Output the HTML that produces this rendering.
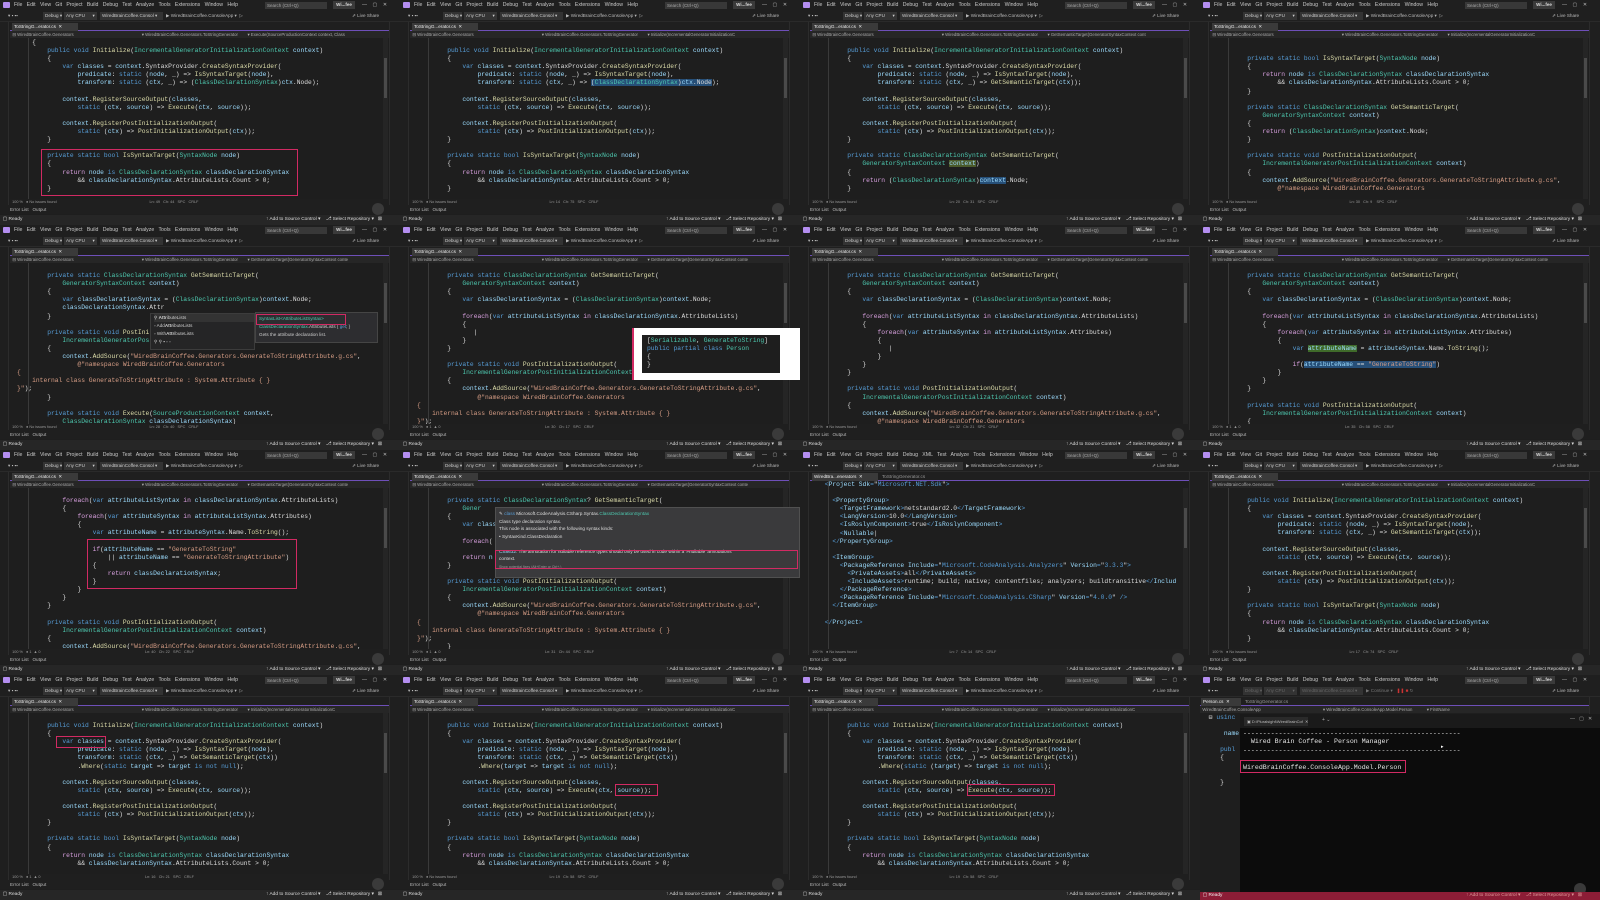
<!DOCTYPE html>
<html><head><meta charset="utf-8">
<style>
*{margin:0;padding:0;box-sizing:border-box}
body{width:1600px;height:900px;background:#1e1e1e;position:relative;overflow:hidden;font-family:"Liberation Sans",sans-serif}
.tile{position:absolute;width:400px;height:225px;overflow:hidden;background:#1e1e1e}
.mb{position:absolute;left:0;top:0;width:400px;height:10px;background:#1f1f1f}
.logo{position:absolute;left:3px;top:2px;width:7px;height:6px;background:#b48ef0;border-radius:1px}
.menu{position:absolute;left:14px;top:1.5px;font-size:5.2px;color:#c8c8c8;white-space:pre}
.srch{position:absolute;left:265px;top:1.5px;width:62px;height:7px;background:#383838;font-size:4.5px;color:#aaa;padding-left:2px;font-weight:normal;line-height:7px}
.wi{position:absolute;left:333px;top:1px;width:22px;height:8px;background:#3a3a3a;font-size:4.5px;color:#ddd;line-height:8px;text-align:center}
.wc{position:absolute;left:362px;top:1.5px;font-size:5px;color:#bbb;white-space:pre}
.tb{position:absolute;left:0;top:10px;width:400px;height:12px;background:#1f1f1f;border-bottom:1px solid #2a2a2a}
.dd{position:absolute;top:2px;height:8px;background:#333;font-size:4.6px;color:#ccc;line-height:8px;padding-left:2px;white-space:pre}
.tx{position:absolute;font-size:4.6px;color:#bbb;white-space:pre}
.ls{position:absolute;left:0;top:22px;width:9px;height:183px;background:#1f1f1f;border-right:1px solid #2c2c2c}
.rs{position:absolute;right:0;top:22px;width:11px;height:183px;background:#1f1f1f;border-left:1px solid #2c2c2c}
.tabs{position:absolute;left:10px;top:22px;width:379px;height:9px;background:#1f1f1f;border-bottom:1px solid #6e4fb8}
.tab{position:absolute;left:2px;top:1px;height:8px;width:66px;background:#3a3a3a;font-size:4.6px;color:#eee;line-height:8px;padding-left:2px;white-space:pre}
.tab2{position:absolute;left:70px;top:1px;height:8px;width:64px;font-size:4.6px;color:#999;line-height:8px;padding-left:2px;white-space:pre}
.nav{position:absolute;left:10px;top:31px;width:379px;height:7px;background:#262626;font-size:4.3px;color:#aaa;line-height:7px;white-space:pre}
.gut{position:absolute;left:28px;top:38px;width:1px;height:161px;background:#3a3a3a}
.vs{position:absolute;left:383px;top:38px;width:5px;height:161px;background:#252525}
.vs i{position:absolute;left:1px;top:20px;width:3px;height:40px;background:#4a4a4a}
pre{position:absolute;left:17px;top:39px;font-family:"Liberation Mono",monospace;font-size:6.3px;line-height:8.1px;color:#dcdcdc}
k{color:#569cd6}t{color:#4ec9b0}m{color:#dcdcaa}v{color:#9cdcfe}s{color:#d69d85;text-decoration:none}c{color:#d8a0df}
.sel{background:#264f78}
.bot{position:absolute;left:10px;top:199px;width:379px;height:6px;background:#1f1f1f;font-size:3.8px;color:#999;line-height:6px;white-space:pre}
.el{position:absolute;left:0;top:205px;width:400px;height:9px;background:#1f1f1f;font-size:4.6px;color:#bbb;line-height:9px;padding-left:10px;white-space:pre}
.sb{position:absolute;left:0;top:215px;width:400px;height:10px;background:#262626;font-size:4.8px;color:#ddd;line-height:10px;white-space:pre}
.sb .r{position:absolute;left:266px;top:0}
.avat{position:absolute;left:372px;top:203px;width:12px;height:12px;border-radius:50%;background:#3a3a3a}
.box{position:absolute;border:1.5px solid #d12a63}
</style></head><body>

<div class="tile" style="left:0;top:0">
<div class="mb"><i class="logo"></i><span class="menu">File   Edit   View   Git   Project   Build   Debug   Test   Analyze   Tools   Extensions   Window   Help</span><b class="srch">Search (Ctrl+Q)</b><b class="wi">Wi...fee</b><span class="wc">—    ▢    ✕</span></div>
<div class="tb"><span class="tx" style="left:8px;top:3px">▾ ▪ ▪▪</span><span class="dd" style="left:43px;width:19px">Debug ▾</span><span class="dd" style="left:64px;width:33px">Any CPU      ▾</span><span class="dd" style="left:100px;width:63px">WiredBrainCoffee.Consol ▾</span><span class="tx" style="left:166px;top:3px">▶ WiredBrainCoffee.ConsoleApp ▾  ▷</span><span class="tx" style="left:352px;top:3px">⇗ Live Share</span></div>
<div class="ls"></div><div class="rs"></div>
<div class="tabs"><span class="tab">ToStringG...erator.cs  ✕</span></div>
<div class="nav">  ⊟ WiredBrainCoffee.Generators                                                         ▾ WiredBrainCoffee.Generators.ToStringGenerator        ▾ Execute(SourceProductionContext context, Class</div>
<div class="gut"></div><div class="vs"><i></i></div>
<pre>    {
        <k>public void</k> <m>Initialize</m>(<t>IncrementalGeneratorInitializationContext</t> <v>context</v>)
        {
            <k>var</k> <v>classes</v> = <v>context</v>.SyntaxProvider.<m>CreateSyntaxProvider</m>(
                <v>predicate</v>: <k>static</k> (<v>node</v>, _) =&gt; <m>IsSyntaxTarget</m>(<v>node</v>),
                <v>transform</v>: <k>static</k> (<v>ctx</v>, _) =&gt; (<t>ClassDeclarationSyntax</t>)<v>ctx</v>.Node);

            <v>context</v>.<m>RegisterSourceOutput</m>(<v>classes</v>,
                <k>static</k> (<v>ctx</v>, <v>source</v>) =&gt; <m>Execute</m>(<v>ctx</v>, <v>source</v>));

            <v>context</v>.<m>RegisterPostInitializationOutput</m>(
                <k>static</k> (<v>ctx</v>) =&gt; <m>PostInitializationOutput</m>(<v>ctx</v>));
        }

        <k>private static bool</k> <m>IsSyntaxTarget</m>(<t>SyntaxNode</t> <v>node</v>)
        {
            <c>return</c> <v>node</v> <k>is</k> <t>ClassDeclarationSyntax</t> <v>classDeclarationSyntax</v>
                &amp;&amp; <v>classDeclarationSyntax</v>.AttributeLists.Count &gt; 0;
        }</pre>
<div class="box" style="left:41px;top:149px;width:257px;height:47px"></div>
<div class="bot">  100 %   ● No issues found                                                                                        Ln: 49   Ch: 44   SPC   CRLF</div>
<div class="el">Error List   Output</div><div class="avat"></div>
<div class="sb">  ▢ Ready<span class="r">↑ Add to Source Control ▾    ⎇ Select Repository ▾   ⊠</span></div>
</div>

<div class="tile" style="left:400px;top:0">
<div class="mb"><i class="logo"></i><span class="menu">File   Edit   View   Git   Project   Build   Debug   Test   Analyze   Tools   Extensions   Window   Help</span><b class="srch">Search (Ctrl+Q)</b><b class="wi">Wi...fee</b><span class="wc">—    ▢    ✕</span></div>
<div class="tb"><span class="tx" style="left:8px;top:3px">▾ ▪ ▪▪</span><span class="dd" style="left:43px;width:19px">Debug ▾</span><span class="dd" style="left:64px;width:33px">Any CPU      ▾</span><span class="dd" style="left:100px;width:63px">WiredBrainCoffee.Consol ▾</span><span class="tx" style="left:166px;top:3px">▶ WiredBrainCoffee.ConsoleApp ▾  ▷</span><span class="tx" style="left:352px;top:3px">⇗ Live Share</span></div>
<div class="ls"></div><div class="rs"></div>
<div class="tabs"><span class="tab">ToStringG...erator.cs  ✕</span></div>
<div class="nav">  ⊟ WiredBrainCoffee.Generators                                                         ▾ WiredBrainCoffee.Generators.ToStringGenerator        ▾ Initialize(IncrementalGeneratorInitializationC</div>
<div class="gut"></div><div class="vs"><i></i></div>
<pre> 
        <k>public void</k> <m>Initialize</m>(<t>IncrementalGeneratorInitializationContext</t> <v>context</v>)
        {
            <k>var</k> <v>classes</v> = <v>context</v>.SyntaxProvider.<m>CreateSyntaxProvider</m>(
                <v>predicate</v>: <k>static</k> (<v>node</v>, _) =&gt; <m>IsSyntaxTarget</m>(<v>node</v>),
                <v>transform</v>: <k>static</k> (<v>ctx</v>, _) =&gt; <span class="sel">(<t>ClassDeclarationSyntax</t>)<v>ctx</v>.Node</span>);

            <v>context</v>.<m>RegisterSourceOutput</m>(<v>classes</v>,
                <k>static</k> (<v>ctx</v>, <v>source</v>) =&gt; <m>Execute</m>(<v>ctx</v>, <v>source</v>));

            <v>context</v>.<m>RegisterPostInitializationOutput</m>(
                <k>static</k> (<v>ctx</v>) =&gt; <m>PostInitializationOutput</m>(<v>ctx</v>));
        }

        <k>private static bool</k> <m>IsSyntaxTarget</m>(<t>SyntaxNode</t> <v>node</v>)
        {
            <c>return</c> <v>node</v> <k>is</k> <t>ClassDeclarationSyntax</t> <v>classDeclarationSyntax</v>
                &amp;&amp; <v>classDeclarationSyntax</v>.AttributeLists.Count &gt; 0;
        }</pre>
<div class="bot">  100 %   ● No issues found                                                                                        Ln: 14   Ch: 75   SPC   CRLF</div>
<div class="el">Error List   Output</div><div class="avat"></div>
<div class="sb">  ▢ Ready<span class="r">↑ Add to Source Control ▾    ⎇ Select Repository ▾   ⊠</span></div>
</div>

<div class="tile" style="left:800px;top:0">
<div class="mb"><i class="logo"></i><span class="menu">File   Edit   View   Git   Project   Build   Debug   Test   Analyze   Tools   Extensions   Window   Help</span><b class="srch">Search (Ctrl+Q)</b><b class="wi">Wi...fee</b><span class="wc">—    ▢    ✕</span></div>
<div class="tb"><span class="tx" style="left:8px;top:3px">▾ ▪ ▪▪</span><span class="dd" style="left:43px;width:19px">Debug ▾</span><span class="dd" style="left:64px;width:33px">Any CPU      ▾</span><span class="dd" style="left:100px;width:63px">WiredBrainCoffee.Consol ▾</span><span class="tx" style="left:166px;top:3px">▶ WiredBrainCoffee.ConsoleApp ▾  ▷</span><span class="tx" style="left:352px;top:3px">⇗ Live Share</span></div>
<div class="ls"></div><div class="rs"></div>
<div class="tabs"><span class="tab">ToStringG...erator.cs  ✕</span></div>
<div class="nav">  ⊟ WiredBrainCoffee.Generators                                                         ▾ WiredBrainCoffee.Generators.ToStringGenerator        ▾ GetSemanticTarget(GeneratorSyntaxContext cont</div>
<div class="gut"></div><div class="vs"><i></i></div>
<pre> 
        <k>public void</k> <m>Initialize</m>(<t>IncrementalGeneratorInitializationContext</t> <v>context</v>)
        {
            <k>var</k> <v>classes</v> = <v>context</v>.SyntaxProvider.<m>CreateSyntaxProvider</m>(
                <v>predicate</v>: <k>static</k> (<v>node</v>, _) =&gt; <m>IsSyntaxTarget</m>(<v>node</v>),
                <v>transform</v>: <k>static</k> (<v>ctx</v>, _) =&gt; <m>GetSemanticTarget</m>(<v>ctx</v>));

            <v>context</v>.<m>RegisterSourceOutput</m>(<v>classes</v>,
                <k>static</k> (<v>ctx</v>, <v>source</v>) =&gt; <m>Execute</m>(<v>ctx</v>, <v>source</v>));

            <v>context</v>.<m>RegisterPostInitializationOutput</m>(
                <k>static</k> (<v>ctx</v>) =&gt; <m>PostInitializationOutput</m>(<v>ctx</v>));
        }

        <k>private static</k> <t>ClassDeclarationSyntax</t> <m>GetSemanticTarget</m>(
            <t>GeneratorSyntaxContext</t> <span style="background:#4b5a2a"><v>context</v></span>)
        {
            <c>return</c> (<t>ClassDeclarationSyntax</t>)<span class="sel"><v>context</v></span>.Node;
        }</pre>
<div class="bot">  100 %   ● No issues found                                                                                        Ln: 20   Ch: 31   SPC   CRLF</div>
<div class="el">Error List   Output</div><div class="avat"></div>
<div class="sb">  ▢ Ready<span class="r">↑ Add to Source Control ▾    ⎇ Select Repository ▾   ⊠</span></div>
</div>

<div class="tile" style="left:1200px;top:0">
<div class="mb"><i class="logo"></i><span class="menu">File   Edit   View   Git   Project   Build   Debug   Test   Analyze   Tools   Extensions   Window   Help</span><b class="srch">Search (Ctrl+Q)</b><b class="wi">Wi...fee</b><span class="wc">—    ▢    ✕</span></div>
<div class="tb"><span class="tx" style="left:8px;top:3px">▾ ▪ ▪▪</span><span class="dd" style="left:43px;width:19px">Debug ▾</span><span class="dd" style="left:64px;width:33px">Any CPU      ▾</span><span class="dd" style="left:100px;width:63px">WiredBrainCoffee.Consol ▾</span><span class="tx" style="left:166px;top:3px">▶ WiredBrainCoffee.ConsoleApp ▾  ▷</span><span class="tx" style="left:352px;top:3px">⇗ Live Share</span></div>
<div class="ls"></div><div class="rs"></div>
<div class="tabs"><span class="tab">ToStringG...erator.cs  ✕</span></div>
<div class="nav">  ⊟ WiredBrainCoffee.Generators                                                         ▾ WiredBrainCoffee.Generators.ToStringGenerator        ▾ Initialize(IncrementalGeneratorInitializationC</div>
<div class="gut"></div><div class="vs"><i></i></div>
<pre> 

        <k>private static bool</k> <m>IsSyntaxTarget</m>(<t>SyntaxNode</t> <v>node</v>)
        {
            <c>return</c> <v>node</v> <k>is</k> <t>ClassDeclarationSyntax</t> <v>classDeclarationSyntax</v>
                &amp;&amp; <v>classDeclarationSyntax</v>.AttributeLists.Count &gt; 0;
        }

        <k>private static</k> <t>ClassDeclarationSyntax</t> <m>GetSemanticTarget</m>(
            <t>GeneratorSyntaxContext</t> <v>context</v>)
        {
            <c>return</c> (<t>ClassDeclarationSyntax</t>)<v>context</v>.Node;
        }

        <k>private static void</k> <m>PostInitializationOutput</m>(
            <t>IncrementalGeneratorPostInitializationContext</t> <v>context</v>)
        {
            <v>context</v>.<m>AddSource</m>(<s>"WiredBrainCoffee.Generators.GenerateToStringAttribute.g.cs"</s>,
                <s>@"namespace WiredBrainCoffee.Generators</s></pre>
<div class="bot">  100 %   ● No issues found                                                                                        Ln: 30   Ch: 9    SPC   CRLF</div>
<div class="el">Error List   Output</div><div class="avat"></div>
<div class="sb">  ▢ Ready<span class="r">↑ Add to Source Control ▾    ⎇ Select Repository ▾   ⊠</span></div>
</div>

<div class="tile" style="left:0;top:225px">
<div class="mb"><i class="logo"></i><span class="menu">File   Edit   View   Git   Project   Build   Debug   Test   Analyze   Tools   Extensions   Window   Help</span><b class="srch">Search (Ctrl+Q)</b><b class="wi">Wi...fee</b><span class="wc">—    ▢    ✕</span></div>
<div class="tb"><span class="tx" style="left:8px;top:3px">▾ ▪ ▪▪</span><span class="dd" style="left:43px;width:19px">Debug ▾</span><span class="dd" style="left:64px;width:33px">Any CPU      ▾</span><span class="dd" style="left:100px;width:63px">WiredBrainCoffee.Consol ▾</span><span class="tx" style="left:166px;top:3px">▶ WiredBrainCoffee.ConsoleApp ▾  ▷</span><span class="tx" style="left:352px;top:3px">⇗ Live Share</span></div>
<div class="ls"></div><div class="rs"></div>
<div class="tabs"><span class="tab">ToStringG...erator.cs  ✕</span></div>
<div class="nav">  ⊟ WiredBrainCoffee.Generators                                                         ▾ WiredBrainCoffee.Generators.ToStringGenerator        ▾ GetSemanticTarget(GeneratorSyntaxContext conte</div>
<div class="gut"></div><div class="vs"><i></i></div>
<pre> 
        <k>private static</k> <t>ClassDeclarationSyntax</t> <m>GetSemanticTarget</m>(
            <t>GeneratorSyntaxContext</t> <v>context</v>)
        {
            <k>var</k> <v>classDeclarationSyntax</v> = (<t>ClassDeclarationSyntax</t>)<v>context</v>.Node;
            <v>classDeclarationSyntax</v>.Attr
        }

        <k>private static void</k> <m>PostIni</m>
            <t>IncrementalGeneratorPos</t>
        {
            <v>context</v>.<m>AddSource</m>(<s>"WiredBrainCoffee.Generators.GenerateToStringAttribute.g.cs"</s>,
                <s>@"namespace WiredBrainCoffee.Generators</s>
<s>{</s>
<s>    internal class GenerateToStringAttribute : System.Attribute { }</s>
<s>}"</s>);
        }

        <k>private static void</k> <m>Execute</m>(<t>SourceProductionContext</t> <v>context</v>,
            <t>ClassDeclarationSyntax</t> <v>classDeclarationSyntax</v>)</pre>
<div style="position:absolute;left:150px;top:88px;width:105px;height:37px;background:#252526;border:1px solid #3c3c3c;font-size:4.6px;color:#ccc;line-height:8px;padding-left:3px;white-space:pre"><div style="background:#333">⚲ <b>Attr</b>ibuteLists</div>▫ Add<b>Attr</b>ibuteLists
▫ With<b>Attr</b>ibuteLists
⚲ ⚲ ▪ ▫ ▫</div>
<div style="position:absolute;left:255px;top:87px;width:123px;height:31px;background:#2d2d30;border:1px solid #454545;font-size:4.6px;color:#ccc;line-height:8px;padding:2px 3px;white-space:pre"><span style="color:#4ec9b0">SyntaxList&lt;AttributeListSyntax&gt;</span>
<span style="color:#4ec9b0">ClassDeclarationSyntax</span>.AttributeLists { <k>get</k>; }
Gets the attribute declaration list.</div>
<div class="box" style="left:256px;top:89px;width:90px;height:11px"></div>
<div class="bot">  100 %   ● No issues found                                                                                        Ln: 28   Ch: 40   SPC   CRLF</div>
<div class="el">Error List   Output</div><div class="avat"></div>
<div class="sb">  ▢ Ready<span class="r">↑ Add to Source Control ▾    ⎇ Select Repository ▾   ⊠</span></div>
</div>

<div class="tile" style="left:400px;top:225px">
<div class="mb"><i class="logo"></i><span class="menu">File   Edit   View   Git   Project   Build   Debug   Test   Analyze   Tools   Extensions   Window   Help</span><b class="srch">Search (Ctrl+Q)</b><b class="wi">Wi...fee</b><span class="wc">—    ▢    ✕</span></div>
<div class="tb"><span class="tx" style="left:8px;top:3px">▾ ▪ ▪▪</span><span class="dd" style="left:43px;width:19px">Debug ▾</span><span class="dd" style="left:64px;width:33px">Any CPU      ▾</span><span class="dd" style="left:100px;width:63px">WiredBrainCoffee.Consol ▾</span><span class="tx" style="left:166px;top:3px">▶ WiredBrainCoffee.ConsoleApp ▾  ▷</span><span class="tx" style="left:352px;top:3px">⇗ Live Share</span></div>
<div class="ls"></div><div class="rs"></div>
<div class="tabs"><span class="tab">ToStringG...erator.cs  ✕</span></div>
<div class="nav">  ⊟ WiredBrainCoffee.Generators                                                         ▾ WiredBrainCoffee.Generators.ToStringGenerator        ▾ GetSemanticTarget(GeneratorSyntaxContext conte</div>
<div class="gut"></div><div class="vs"><i></i></div>
<pre> 
        <k>private static</k> <t>ClassDeclarationSyntax</t> <m>GetSemanticTarget</m>(
            <t>GeneratorSyntaxContext</t> <v>context</v>)
        {
            <k>var</k> <v>classDeclarationSyntax</v> = (<t>ClassDeclarationSyntax</t>)<v>context</v>.Node;

            <c>foreach</c>(<k>var</k> <v>attributeListSyntax</v> <c>in</c> <v>classDeclarationSyntax</v>.AttributeLists)
            {
               |
            }
        }

        <k>private static void</k> <m>PostInitializationOutput</m>(
            <t>IncrementalGeneratorPostInitializationContext</t> <v>context</v>)
        {
            <v>context</v>.<m>AddSource</m>(<s>"WiredBrainCoffee.Generators.GenerateToStringAttribute.g.cs"</s>,
                <s>@"namespace WiredBrainCoffee.Generators</s>
<s>{</s>
<s>    internal class GenerateToStringAttribute : System.Attribute { }</s>
<s>}"</s>);</pre>
<div style="position:absolute;left:232px;top:103px;width:168px;height:52px;background:#fff;border-left:2px solid #d12a63"></div>
<div style="position:absolute;left:242px;top:110px;width:138px;height:38px;background:#1e1e1e;font-family:'Liberation Mono',monospace;font-size:6.3px;line-height:8.1px;color:#dcdcdc;padding:2px 5px;white-space:pre">[<t>Serializable</t>, <t>GenerateToString</t>]
<k>public partial class</k> <t>Person</t>
{
}</div>
<div class="bot">  100 %   ● 1  ▲ 0                                                                                                   Ln: 30   Ch: 17   SPC   CRLF</div>
<div class="el">Error List   Output</div><div class="avat"></div>
<div class="sb">  ▢ Ready<span class="r">↑ Add to Source Control ▾    ⎇ Select Repository ▾   ⊠</span></div>
</div>

<div class="tile" style="left:800px;top:225px">
<div class="mb"><i class="logo"></i><span class="menu">File   Edit   View   Git   Project   Build   Debug   Test   Analyze   Tools   Extensions   Window   Help</span><b class="srch">Search (Ctrl+Q)</b><b class="wi">Wi...fee</b><span class="wc">—    ▢    ✕</span></div>
<div class="tb"><span class="tx" style="left:8px;top:3px">▾ ▪ ▪▪</span><span class="dd" style="left:43px;width:19px">Debug ▾</span><span class="dd" style="left:64px;width:33px">Any CPU      ▾</span><span class="dd" style="left:100px;width:63px">WiredBrainCoffee.Consol ▾</span><span class="tx" style="left:166px;top:3px">▶ WiredBrainCoffee.ConsoleApp ▾  ▷</span><span class="tx" style="left:352px;top:3px">⇗ Live Share</span></div>
<div class="ls"></div><div class="rs"></div>
<div class="tabs"><span class="tab">ToStringG...erator.cs  ✕</span></div>
<div class="nav">  ⊟ WiredBrainCoffee.Generators                                                         ▾ WiredBrainCoffee.Generators.ToStringGenerator        ▾ GetSemanticTarget(GeneratorSyntaxContext conte</div>
<div class="gut"></div><div class="vs"><i></i></div>
<pre> 
        <k>private static</k> <t>ClassDeclarationSyntax</t> <m>GetSemanticTarget</m>(
            <t>GeneratorSyntaxContext</t> <v>context</v>)
        {
            <k>var</k> <v>classDeclarationSyntax</v> = (<t>ClassDeclarationSyntax</t>)<v>context</v>.Node;

            <c>foreach</c>(<k>var</k> <v>attributeListSyntax</v> <c>in</c> <v>classDeclarationSyntax</v>.AttributeLists)
            {
                <c>foreach</c>(<k>var</k> <v>attributeSyntax</v> <c>in</c> <v>attributeListSyntax</v>.Attributes)
                {
                   |
                }
            }
        }

        <k>private static void</k> <m>PostInitializationOutput</m>(
            <t>IncrementalGeneratorPostInitializationContext</t> <v>context</v>)
        {
            <v>context</v>.<m>AddSource</m>(<s>"WiredBrainCoffee.Generators.GenerateToStringAttribute.g.cs"</s>,
                <s>@"namespace WiredBrainCoffee.Generators</s></pre>
<div class="bot">  100 %   ● No issues found                                                                                        Ln: 32   Ch: 21   SPC   CRLF</div>
<div class="el">Error List   Output</div><div class="avat"></div>
<div class="sb">  ▢ Ready<span class="r">↑ Add to Source Control ▾    ⎇ Select Repository ▾   ⊠</span></div>
</div>

<div class="tile" style="left:1200px;top:225px">
<div class="mb"><i class="logo"></i><span class="menu">File   Edit   View   Git   Project   Build   Debug   Test   Analyze   Tools   Extensions   Window   Help</span><b class="srch">Search (Ctrl+Q)</b><b class="wi">Wi...fee</b><span class="wc">—    ▢    ✕</span></div>
<div class="tb"><span class="tx" style="left:8px;top:3px">▾ ▪ ▪▪</span><span class="dd" style="left:43px;width:19px">Debug ▾</span><span class="dd" style="left:64px;width:33px">Any CPU      ▾</span><span class="dd" style="left:100px;width:63px">WiredBrainCoffee.Consol ▾</span><span class="tx" style="left:166px;top:3px">▶ WiredBrainCoffee.ConsoleApp ▾  ▷</span><span class="tx" style="left:352px;top:3px">⇗ Live Share</span></div>
<div class="ls"></div><div class="rs"></div>
<div class="tabs"><span class="tab">ToStringG...erator.cs  ✕</span></div>
<div class="nav">  ⊟ WiredBrainCoffee.Generators                                                         ▾ WiredBrainCoffee.Generators.ToStringGenerator        ▾ GetSemanticTarget(GeneratorSyntaxContext conte</div>
<div class="gut"></div><div class="vs"><i></i></div>
<pre> 
        <k>private static</k> <t>ClassDeclarationSyntax</t> <m>GetSemanticTarget</m>(
            <t>GeneratorSyntaxContext</t> <v>context</v>)
        {
            <k>var</k> <v>classDeclarationSyntax</v> = (<t>ClassDeclarationSyntax</t>)<v>context</v>.Node;

            <c>foreach</c>(<k>var</k> <v>attributeListSyntax</v> <c>in</c> <v>classDeclarationSyntax</v>.AttributeLists)
            {
                <c>foreach</c>(<k>var</k> <v>attributeSyntax</v> <c>in</c> <v>attributeListSyntax</v>.Attributes)
                {
                    <k>var</k> <span style="background:#3f6a2a"><v>attributeName</v></span> = <v>attributeSyntax</v>.Name.<m>ToString</m>();

                    <c>if</c>(<span class="sel"><v>attributeName</v> == <s>"GenerateToString"</s></span>)
                }
            }
        }

        <k>private static void</k> <m>PostInitializationOutput</m>(
            <t>IncrementalGeneratorPostInitializationContext</t> <v>context</v>)
        {</pre>
<div class="bot">  100 %   ● 1  ▲ 0                                                                                                   Ln: 35   Ch: 58   SPC   CRLF</div>
<div class="el">Error List   Output</div><div class="avat"></div>
<div class="sb">  ▢ Ready<span class="r">↑ Add to Source Control ▾    ⎇ Select Repository ▾   ⊠</span></div>
</div>

<div class="tile" style="left:0;top:450px">
<div class="mb"><i class="logo"></i><span class="menu">File   Edit   View   Git   Project   Build   Debug   Test   Analyze   Tools   Extensions   Window   Help</span><b class="srch">Search (Ctrl+Q)</b><b class="wi">Wi...fee</b><span class="wc">—    ▢    ✕</span></div>
<div class="tb"><span class="tx" style="left:8px;top:3px">▾ ▪ ▪▪</span><span class="dd" style="left:43px;width:19px">Debug ▾</span><span class="dd" style="left:64px;width:33px">Any CPU      ▾</span><span class="dd" style="left:100px;width:63px">WiredBrainCoffee.Consol ▾</span><span class="tx" style="left:166px;top:3px">▶ WiredBrainCoffee.ConsoleApp ▾  ▷</span><span class="tx" style="left:352px;top:3px">⇗ Live Share</span></div>
<div class="ls"></div><div class="rs"></div>
<div class="tabs"><span class="tab">ToStringG...erator.cs  ✕</span></div>
<div class="nav">  ⊟ WiredBrainCoffee.Generators                                                         ▾ WiredBrainCoffee.Generators.ToStringGenerator        ▾ GetSemanticTarget(GeneratorSyntaxContext conte</div>
<div class="gut"></div><div class="vs"><i></i></div>
<pre> 
            <c>foreach</c>(<k>var</k> <v>attributeListSyntax</v> <c>in</c> <v>classDeclarationSyntax</v>.AttributeLists)
            {
                <c>foreach</c>(<k>var</k> <v>attributeSyntax</v> <c>in</c> <v>attributeListSyntax</v>.Attributes)
                {
                    <k>var</k> <v>attributeName</v> = <v>attributeSyntax</v>.Name.<m>ToString</m>();

                    <c>if</c>(<v>attributeName</v> == <s>"GenerateToString"</s>
                        || <v>attributeName</v> == <s>"GenerateToStringAttribute"</s>)
                    {
                        <c>return</c> <v>classDeclarationSyntax</v>;
                    }
                }
            }
        }

        <k>private static void</k> <m>PostInitializationOutput</m>(
            <t>IncrementalGeneratorPostInitializationContext</t> <v>context</v>)
        {
            <v>context</v>.<m>AddSource</m>(<s>"WiredBrainCoffee.Generators.GenerateToStringAttribute.g.cs"</s>,</pre>
<div class="box" style="left:87px;top:89px;width:210px;height:50px"></div>
<div class="bot">  100 %   ● 1  ▲ 0                                                                                                   Ln: 40   Ch: 22   SPC   CRLF</div>
<div class="el">Error List   Output</div><div class="avat"></div>
<div class="sb">  ▢ Ready<span class="r">↑ Add to Source Control ▾    ⎇ Select Repository ▾   ⊠</span></div>
</div>

<div class="tile" style="left:400px;top:450px">
<div class="mb"><i class="logo"></i><span class="menu">File   Edit   View   Git   Project   Build   Debug   Test   Analyze   Tools   Extensions   Window   Help</span><b class="srch">Search (Ctrl+Q)</b><b class="wi">Wi...fee</b><span class="wc">—    ▢    ✕</span></div>
<div class="tb"><span class="tx" style="left:8px;top:3px">▾ ▪ ▪▪</span><span class="dd" style="left:43px;width:19px">Debug ▾</span><span class="dd" style="left:64px;width:33px">Any CPU      ▾</span><span class="dd" style="left:100px;width:63px">WiredBrainCoffee.Consol ▾</span><span class="tx" style="left:166px;top:3px">▶ WiredBrainCoffee.ConsoleApp ▾  ▷</span><span class="tx" style="left:352px;top:3px">⇗ Live Share</span></div>
<div class="ls"></div><div class="rs"></div>
<div class="tabs"><span class="tab">ToStringG...erator.cs  ✕</span></div>
<div class="nav">  ⊟ WiredBrainCoffee.Generators                                                         ▾ WiredBrainCoffee.Generators.ToStringGenerator        ▾ GetSemanticTarget(GeneratorSyntaxContext conte</div>
<div class="gut"></div><div class="vs"><i></i></div>
<pre> 
        <k>private static</k> <t>ClassDeclarationSyntax</t>? <m>GetSemanticTarget</m>(
            <t>Gener</t>
        {
            <k>var</k> <v>class</v>

            <c>foreach</c>(

            <c>return</c> <v>n</v>
        }

        <k>private static void</k> <m>PostInitializationOutput</m>(
            <t>IncrementalGeneratorPostInitializationContext</t> <v>context</v>)
        {
            <v>context</v>.<m>AddSource</m>(<s>"WiredBrainCoffee.Generators.GenerateToStringAttribute.g.cs"</s>,
                <s>@"namespace WiredBrainCoffee.Generators</s>
<s>{</s>
<s>    internal class GenerateToStringAttribute : System.Attribute { }</s>
<s>}"</s>);
        }</pre>
<div style="position:absolute;left:95px;top:57px;width:305px;height:71px;background:#3a3a3c;border:1px solid #505050;font-size:4.7px;color:#ddd;line-height:7.5px;padding:2px 3px;white-space:pre">✎ <k>class</k> Microsoft.CodeAnalysis.CSharp.Syntax.<t>ClassDeclarationSyntax</t>
Class type declaration syntax.
This node is associated with the following syntax kinds:
• SyntaxKind.ClassDeclaration

<v>CS8632</v>: The annotation for nullable reference types should only be used in code within a '#nullable' annotations
context.
<span style="font-size:3.5px;color:#999">Show potential fixes (Alt+Enter or Ctrl+.)</span></div>
<div class="box" style="left:95px;top:100px;width:303px;height:19px"></div>
<div class="bot">  100 %   ● 1  ▲ 0                                                                                                   Ln: 31   Ch: 44   SPC   CRLF</div>
<div class="el">Error List   Output</div><div class="avat"></div>
<div class="sb">  ▢ Ready<span class="r">↑ Add to Source Control ▾    ⎇ Select Repository ▾   ⊠</span></div>
</div>

<div class="tile" style="left:800px;top:450px">
<div class="mb"><i class="logo"></i><span class="menu">File   Edit   View   Git   Project   Build   Debug   XML   Test   Analyze   Tools   Extensions   Window   Help</span><b class="srch">Search (Ctrl+Q)</b><b class="wi">Wi...fee</b><span class="wc">—    ▢    ✕</span></div>
<div class="tb"><span class="tx" style="left:8px;top:3px">▾ ▪ ▪▪</span><span class="dd" style="left:43px;width:19px">Debug ▾</span><span class="dd" style="left:64px;width:33px">Any CPU      ▾</span><span class="dd" style="left:100px;width:63px">WiredBrainCoffee.Consol ▾</span><span class="tx" style="left:166px;top:3px">▶ WiredBrainCoffee.ConsoleApp ▾  ▷</span><span class="tx" style="left:352px;top:3px">⇗ Live Share</span></div>
<div class="ls"></div><div class="rs"></div>
<div class="tabs"><span class="tab">WiredBra...enerators  ✕</span><span class="tab2">ToStringGenerator.cs</span></div>
<div class="gut" style="top:31px;height:168px"></div><div class="vs"><i></i></div>
<pre style="left:21px;top:31px"> <k>&lt;</k><v>Project</v> <v>Sdk</v><k>=</k>"<k>Microsoft.NET.Sdk</k>"<k>&gt;</k>

   <k>&lt;</k><v>PropertyGroup</v><k>&gt;</k>
     <k>&lt;</k><v>TargetFramework</v><k>&gt;</k>netstandard2.0<k>&lt;/</k><v>TargetFramework</v><k>&gt;</k>
     <k>&lt;</k><v>LangVersion</v><k>&gt;</k>10.0<k>&lt;/</k><v>LangVersion</v><k>&gt;</k>
     <k>&lt;</k><v>IsRoslynComponent</v><k>&gt;</k>true<k>&lt;/</k><v>IsRoslynComponent</v><k>&gt;</k>
     <k>&lt;</k><v>Nullable</v>|
   <k>&lt;/</k><v>PropertyGroup</v><k>&gt;</k>

   <k>&lt;</k><v>ItemGroup</v><k>&gt;</k>
     <k>&lt;</k><v>PackageReference</v> <v>Include</v><k>=</k>"<k>Microsoft.CodeAnalysis.Analyzers</k>" <v>Version</v><k>=</k>"<k>3.3.3</k>"<k>&gt;</k>
       <k>&lt;</k><v>PrivateAssets</v><k>&gt;</k>all<k>&lt;/</k><v>PrivateAssets</v><k>&gt;</k>
       <k>&lt;</k><v>IncludeAssets</v><k>&gt;</k>runtime; build; native; contentfiles; analyzers; buildtransitive<k>&lt;/</k><v>Includ</v>
     <k>&lt;/</k><v>PackageReference</v><k>&gt;</k>
     <k>&lt;</k><v>PackageReference</v> <v>Include</v><k>=</k>"<k>Microsoft.CodeAnalysis.CSharp</k>" <v>Version</v><k>=</k>"<k>4.0.0</k>" <k>/&gt;</k>
   <k>&lt;/</k><v>ItemGroup</v><k>&gt;</k>

 <k>&lt;/</k><v>Project</v><k>&gt;</k></pre>
<div class="bot">  100 %   ● No issues found                                                                                        Ln: 7   Ch: 14   SPC   CRLF</div>
<div class="el">Error List   Output</div><div class="avat"></div>
<div class="sb">  ▢ Ready<span class="r">↑ Add to Source Control ▾    ⎇ Select Repository ▾   ⊠</span></div>
</div>

<div class="tile" style="left:1200px;top:450px">
<div class="mb"><i class="logo"></i><span class="menu">File   Edit   View   Git   Project   Build   Debug   Test   Analyze   Tools   Extensions   Window   Help</span><b class="srch">Search (Ctrl+Q)</b><b class="wi">Wi...fee</b><span class="wc">—    ▢    ✕</span></div>
<div class="tb"><span class="tx" style="left:8px;top:3px">▾ ▪ ▪▪</span><span class="dd" style="left:43px;width:19px">Debug ▾</span><span class="dd" style="left:64px;width:33px">Any CPU      ▾</span><span class="dd" style="left:100px;width:63px">WiredBrainCoffee.Consol ▾</span><span class="tx" style="left:166px;top:3px">▶ WiredBrainCoffee.ConsoleApp ▾  ▷</span><span class="tx" style="left:352px;top:3px">⇗ Live Share</span></div>
<div class="ls"></div><div class="rs"></div>
<div class="tabs"><span class="tab">ToStringG...erator.cs  ✕</span></div>
<div class="nav">  ⊟ WiredBrainCoffee.Generators                                                         ▾ WiredBrainCoffee.Generators.ToStringGenerator        ▾ Initialize(IncrementalGeneratorInitializationC</div>
<div class="gut"></div><div class="vs"><i></i></div>
<pre> 
        <k>public void</k> <m>Initialize</m>(<t>IncrementalGeneratorInitializationContext</t> <v>context</v>)
        {
            <k>var</k> <v>classes</v> = <v>context</v>.SyntaxProvider.<m>CreateSyntaxProvider</m>(
                <v>predicate</v>: <k>static</k> (<v>node</v>, _) =&gt; <m>IsSyntaxTarget</m>(<v>node</v>),
                <v>transform</v>: <k>static</k> (<v>ctx</v>, _) =&gt; <m>GetSemanticTarget</m>(<v>ctx</v>));

            <v>context</v>.<m>RegisterSourceOutput</m>(<v>classes</v>,
                <k>static</k> (<v>ctx</v>, <v>source</v>) =&gt; <m>Execute</m>(<v>ctx</v>, <v>source</v>));

            <v>context</v>.<m>RegisterPostInitializationOutput</m>(
                <k>static</k> (<v>ctx</v>) =&gt; <m>PostInitializationOutput</m>(<v>ctx</v>));
        }

        <k>private static bool</k> <m>IsSyntaxTarget</m>(<t>SyntaxNode</t> <v>node</v>)
        {
            <c>return</c> <v>node</v> <k>is</k> <t>ClassDeclarationSyntax</t> <v>classDeclarationSyntax</v>
                &amp;&amp; <v>classDeclarationSyntax</v>.AttributeLists.Count &gt; 0;
        }</pre>
<div class="bot">  100 %   ● No issues found                                                                                        Ln: 17   Ch: 74   SPC   CRLF</div>
<div class="el">Error List   Output</div><div class="avat"></div>
<div class="sb">  ▢ Ready<span class="r">↑ Add to Source Control ▾    ⎇ Select Repository ▾   ⊠</span></div>
</div>

<div class="tile" style="left:0;top:675px">
<div class="mb"><i class="logo"></i><span class="menu">File   Edit   View   Git   Project   Build   Debug   Test   Analyze   Tools   Extensions   Window   Help</span><b class="srch">Search (Ctrl+Q)</b><b class="wi">Wi...fee</b><span class="wc">—    ▢    ✕</span></div>
<div class="tb"><span class="tx" style="left:8px;top:3px">▾ ▪ ▪▪</span><span class="dd" style="left:43px;width:19px">Debug ▾</span><span class="dd" style="left:64px;width:33px">Any CPU      ▾</span><span class="dd" style="left:100px;width:63px">WiredBrainCoffee.Consol ▾</span><span class="tx" style="left:166px;top:3px">▶ WiredBrainCoffee.ConsoleApp ▾  ▷</span><span class="tx" style="left:352px;top:3px">⇗ Live Share</span></div>
<div class="ls"></div><div class="rs"></div>
<div class="tabs"><span class="tab">ToStringG...erator.cs  ✕</span></div>
<div class="nav">  ⊟ WiredBrainCoffee.Generators                                                         ▾ WiredBrainCoffee.Generators.ToStringGenerator        ▾ Initialize(IncrementalGeneratorInitializationC</div>
<div class="gut"></div><div class="vs"><i></i></div>
<pre> 
        <k>public void</k> <m>Initialize</m>(<t>IncrementalGeneratorInitializationContext</t> <v>context</v>)
        {
            <k>var</k> <v>classes</v> = <v>context</v>.SyntaxProvider.<m>CreateSyntaxProvider</m>(
                <v>predicate</v>: <k>static</k> (<v>node</v>, _) =&gt; <m>IsSyntaxTarget</m>(<v>node</v>),
                <v>transform</v>: <k>static</k> (<v>ctx</v>, _) =&gt; <m>GetSemanticTarget</m>(<v>ctx</v>))
                .<m>Where</m>(<k>static</k> <v>target</v> =&gt; <v>target</v> <k>is not null</k>);

            <v>context</v>.<m>RegisterSourceOutput</m>(<v>classes</v>,
                <k>static</k> (<v>ctx</v>, <v>source</v>) =&gt; <m>Execute</m>(<v>ctx</v>, <v>source</v>));

            <v>context</v>.<m>RegisterPostInitializationOutput</m>(
                <k>static</k> (<v>ctx</v>) =&gt; <m>PostInitializationOutput</m>(<v>ctx</v>));
        }

        <k>private static bool</k> <m>IsSyntaxTarget</m>(<t>SyntaxNode</t> <v>node</v>)
        {
            <c>return</c> <v>node</v> <k>is</k> <t>ClassDeclarationSyntax</t> <v>classDeclarationSyntax</v>
                &amp;&amp; <v>classDeclarationSyntax</v>.AttributeLists.Count &gt; 0;</pre>
<div class="box" style="left:56px;top:61px;width:50px;height:12px"></div>
<div class="bot">  100 %   ● 1  ▲ 0                                                                                                   Ln: 16   Ch: 21   SPC   CRLF</div>
<div class="el">Error List   Output</div><div class="avat"></div>
<div class="sb">  ▢ Ready<span class="r">↑ Add to Source Control ▾    ⎇ Select Repository ▾   ⊠</span></div>
</div>

<div class="tile" style="left:400px;top:675px">
<div class="mb"><i class="logo"></i><span class="menu">File   Edit   View   Git   Project   Build   Debug   Test   Analyze   Tools   Extensions   Window   Help</span><b class="srch">Search (Ctrl+Q)</b><b class="wi">Wi...fee</b><span class="wc">—    ▢    ✕</span></div>
<div class="tb"><span class="tx" style="left:8px;top:3px">▾ ▪ ▪▪</span><span class="dd" style="left:43px;width:19px">Debug ▾</span><span class="dd" style="left:64px;width:33px">Any CPU      ▾</span><span class="dd" style="left:100px;width:63px">WiredBrainCoffee.Consol ▾</span><span class="tx" style="left:166px;top:3px">▶ WiredBrainCoffee.ConsoleApp ▾  ▷</span><span class="tx" style="left:352px;top:3px">⇗ Live Share</span></div>
<div class="ls"></div><div class="rs"></div>
<div class="tabs"><span class="tab">ToStringG...erator.cs  ✕</span></div>
<div class="nav">  ⊟ WiredBrainCoffee.Generators                                                         ▾ WiredBrainCoffee.Generators.ToStringGenerator        ▾ Initialize(IncrementalGeneratorInitializationC</div>
<div class="gut"></div><div class="vs"><i></i></div>
<pre> 
        <k>public void</k> <m>Initialize</m>(<t>IncrementalGeneratorInitializationContext</t> <v>context</v>)
        {
            <k>var</k> <v>classes</v> = <v>context</v>.SyntaxProvider.<m>CreateSyntaxProvider</m>(
                <v>predicate</v>: <k>static</k> (<v>node</v>, _) =&gt; <m>IsSyntaxTarget</m>(<v>node</v>),
                <v>transform</v>: <k>static</k> (<v>ctx</v>, _) =&gt; <m>GetSemanticTarget</m>(<v>ctx</v>))
                .<m>Where</m>(<v>target</v> =&gt; <v>target</v> <k>is not null</k>);

            <v>context</v>.<m>RegisterSourceOutput</m>(<v>classes</v>,
                <k>static</k> (<v>ctx</v>, <v>source</v>) =&gt; <m>Execute</m>(<v>ctx</v>, <v>source</v>));

            <v>context</v>.<m>RegisterPostInitializationOutput</m>(
                <k>static</k> (<v>ctx</v>) =&gt; <m>PostInitializationOutput</m>(<v>ctx</v>));
        }

        <k>private static bool</k> <m>IsSyntaxTarget</m>(<t>SyntaxNode</t> <v>node</v>)
        {
            <c>return</c> <v>node</v> <k>is</k> <t>ClassDeclarationSyntax</t> <v>classDeclarationSyntax</v>
                &amp;&amp; <v>classDeclarationSyntax</v>.AttributeLists.Count &gt; 0;</pre>
<div class="box" style="left:215px;top:109px;width:43px;height:12px"></div>
<div class="bot">  100 %   ● No issues found                                                                                        Ln: 19   Ch: 58   SPC   CRLF</div>
<div class="el">Error List   Output</div><div class="avat"></div>
<div class="sb">  ▢ Ready<span class="r">↑ Add to Source Control ▾    ⎇ Select Repository ▾   ⊠</span></div>
</div>

<div class="tile" style="left:800px;top:675px">
<div class="mb"><i class="logo"></i><span class="menu">File   Edit   View   Git   Project   Build   Debug   Test   Analyze   Tools   Extensions   Window   Help</span><b class="srch">Search (Ctrl+Q)</b><b class="wi">Wi...fee</b><span class="wc">—    ▢    ✕</span></div>
<div class="tb"><span class="tx" style="left:8px;top:3px">▾ ▪ ▪▪</span><span class="dd" style="left:43px;width:19px">Debug ▾</span><span class="dd" style="left:64px;width:33px">Any CPU      ▾</span><span class="dd" style="left:100px;width:63px">WiredBrainCoffee.Consol ▾</span><span class="tx" style="left:166px;top:3px">▶ WiredBrainCoffee.ConsoleApp ▾  ▷</span><span class="tx" style="left:352px;top:3px">⇗ Live Share</span></div>
<div class="ls"></div><div class="rs"></div>
<div class="tabs"><span class="tab">ToStringG...erator.cs  ✕</span></div>
<div class="nav">  ⊟ WiredBrainCoffee.Generators                                                         ▾ WiredBrainCoffee.Generators.ToStringGenerator        ▾ Initialize(IncrementalGeneratorInitializationC</div>
<div class="gut"></div><div class="vs"><i></i></div>
<pre> 
        <k>public void</k> <m>Initialize</m>(<t>IncrementalGeneratorInitializationContext</t> <v>context</v>)
        {
            <k>var</k> <v>classes</v> = <v>context</v>.SyntaxProvider.<m>CreateSyntaxProvider</m>(
                <v>predicate</v>: <k>static</k> (<v>node</v>, _) =&gt; <m>IsSyntaxTarget</m>(<v>node</v>),
                <v>transform</v>: <k>static</k> (<v>ctx</v>, _) =&gt; <m>GetSemanticTarget</m>(<v>ctx</v>))
                .<m>Where</m>(<k>static</k> (<v>target</v>) =&gt; <v>target</v> <k>is not null</k>);

            <v>context</v>.<m>RegisterSourceOutput</m>(<v>classes</v>,
                <k>static</k> (<v>ctx</v>, <v>source</v>) =&gt; <m>Execute</m>(<v>ctx</v>, <v>source</v>));

            <v>context</v>.<m>RegisterPostInitializationOutput</m>(
                <k>static</k> (<v>ctx</v>) =&gt; <m>PostInitializationOutput</m>(<v>ctx</v>));
        }

        <k>private static bool</k> <m>IsSyntaxTarget</m>(<t>SyntaxNode</t> <v>node</v>)
        {
            <c>return</c> <v>node</v> <k>is</k> <t>ClassDeclarationSyntax</t> <v>classDeclarationSyntax</v>
                &amp;&amp; <v>classDeclarationSyntax</v>.AttributeLists.Count &gt; 0;</pre>
<div class="box" style="left:167px;top:109px;width:88px;height:12px"></div>
<div class="bot">  100 %   ● No issues found                                                                                        Ln: 19   Ch: 58   SPC   CRLF</div>
<div class="el">Error List   Output</div><div class="avat"></div>
<div class="sb">  ▢ Ready<span class="r">↑ Add to Source Control ▾    ⎇ Select Repository ▾   ⊠</span></div>
</div>

<div class="tile" style="left:1200px;top:675px">
<div class="mb"><i class="logo"></i><span class="menu">File   Edit   View   Git   Project   Build   Debug   Test   Analyze   Tools   Extensions   Window   Help</span><b class="srch">Search (Ctrl+Q)</b><b class="wi">Wi...fee</b><span class="wc">—    ▢    ✕</span></div>
<div class="tb"><span class="tx" style="left:8px;top:3px">▾ ▪ ▪▪</span><span class="dd" style="left:43px;width:19px;color:#666">Debug ▾</span><span class="dd" style="left:64px;width:33px;color:#666">Any CPU      ▾</span><span class="dd" style="left:100px;width:63px;color:#666">WiredBrainCoffee.Consol ▾</span><span class="tx" style="left:166px;top:3px;color:#777">▶ Continue ▾   <span style="color:#c33">❚❚ ■</span> ↻</span><span class="tx" style="left:352px;top:3px">⇗ Live Share</span></div>
<div class="rs"></div>
<div class="tabs" style="left:0;width:389px"><span class="tab" style="left:1px;width:40px">Person.cs  ✕</span><span class="tab2" style="left:43px">ToStringGenerator.cs</span></div>
<div class="nav" style="left:0;width:389px">  WiredBrainCoffee.ConsoleApp                                                    ▾ WiredBrainCoffee.ConsoleApp.Model.Person            ▾ FirstName</div>
<pre style="left:5px"> ⊟ <k>usinc</k>

     <v>name</v>

    <k>publ</k>
    {


    }</pre>
<div style="position:absolute;left:40px;top:39px;width:360px;height:186px;background:#0c0c0c">
<div style="position:absolute;left:0;top:0;width:360px;height:14px;background:#1a1a1a"></div>
<div style="position:absolute;left:4px;top:3px;width:64px;height:9px;background:#2a2a2a;font-size:4px;color:#bbb;line-height:9px;padding-left:3px;white-space:pre">▣ D:\Pluralsight\WiredBrainCof  ✕</div>
<div style="position:absolute;left:82px;top:3px;font-size:5px;color:#aaa">+  ⌄</div>
<div style="position:absolute;left:330px;top:2px;font-size:5px;color:#aaa;white-space:pre">—   ▢   ✕</div>
<pre style="left:3px;top:16px;font-size:6.6px;line-height:8.4px;color:#e6e6e6">-------------------------------------------------------
  Wired Brain Coffee - Person Manager
-------------------------------------------------------

WiredBrainCoffee.ConsoleApp.Model.Person</pre>
<div class="box" style="left:0;top:46px;width:166px;height:13px"></div>
<div style="position:absolute;left:201px;top:30px;font-size:5px;color:#fff">▸</div>
</div>
<div class="avat" style="left:374px;top:208px"></div>
<div class="sb" style="background:#8c1d36;color:#eee;top:217px;height:8px;line-height:8px">  ▢ Ready<span class="r" style="color:#d99">↑ Add to Source Control ▾    ⎇ Select Repository ▾   ⊠</span></div>
</div>

</body></html>
